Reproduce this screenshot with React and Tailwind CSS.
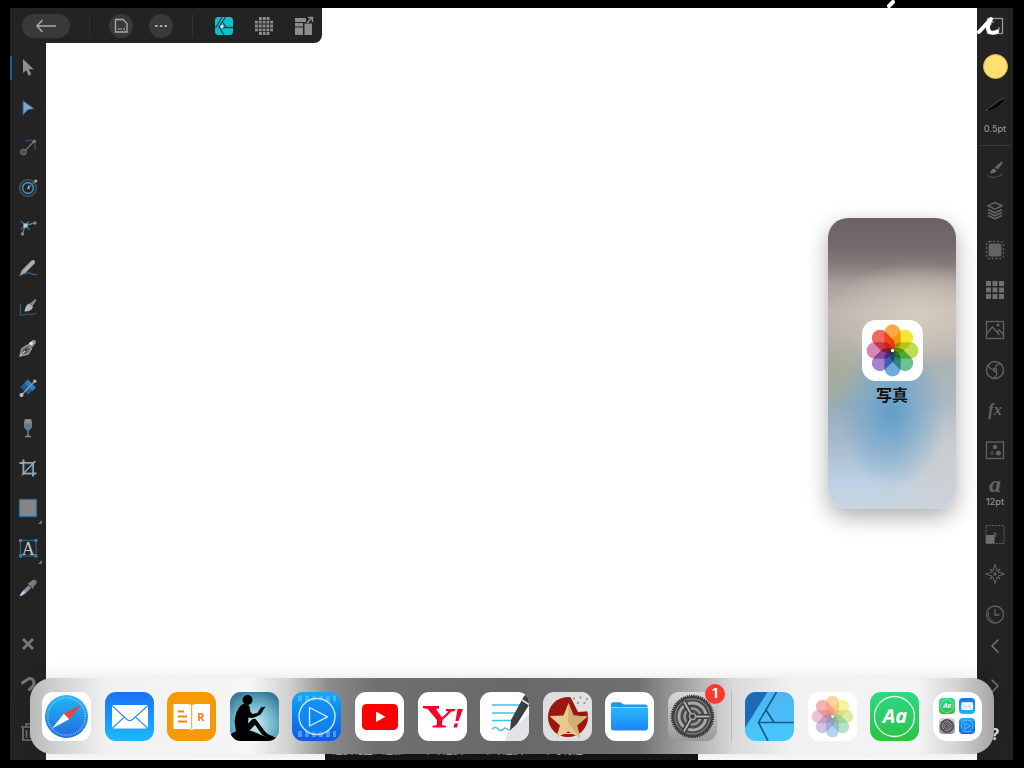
import { ChevronLeft, ChevronRight } from 'lucide-react'

const petals = ['#fb9d26', '#f5e31a', '#b2d83c', '#56bb84', '#559fdc', '#9674c6', '#d076ac', '#f2524a']

function Flower({ className = '' }) {
  return (
    <svg viewBox="0 0 60 60" className={`isolate size-full ${className}`}>
      <rect width="60" height="60" fill="#fff" />
      {petals.map((c, i) => (
        <rect key={c} x="22" y="4.5" width="16" height="25.5" rx="8" fill={c} opacity="0.88"
          transform={`rotate(${i * 45} 30 30)`} className="mix-blend-multiply" />
      ))}
      <circle cx="30" cy="30" r="1.6" fill="#fff" />
    </svg>
  )
}

/* 24px drawings for the tool rails */
function Icon({ children }) {
  return (
    <svg viewBox="0 0 24 24" width="24" height="24" fill="none" stroke="currentColor" strokeWidth="1.3" className="shrink-0">
      {children}
    </svg>
  )
}

const tools = [
  { label: 'Move', art: <path d="M7 3v14l3.2-2.8 2.4 5.6 2.8-1.2-2.5-5.4h4.8z" fill="#8d8d8d" stroke="none" /> },
  { label: 'Node', art: <path d="M7 4.8 18 12.6 11.5 14 7 19z" fill="#84a3bf" stroke="#23628f" strokeWidth="1" /> },
  { label: 'Corner', art: <>
    <path d="M9 4.5h10v10" stroke="#1f5173" />
    <circle cx="7.5" cy="16" r="2.6" fill="#4a4a4a" stroke="#6a6a6a" />
    <path d="m9.5 14 8-8" stroke="#777" /><circle cx="18.2" cy="5.5" r="1.8" fill="#777" stroke="none" />
  </> },
  { label: 'Contour', art: <>
    <circle cx="12" cy="12" r="8.3" stroke="#35627f" /><circle cx="12" cy="12" r="5.4" stroke="#4d88ad" strokeWidth="1.6" />
    <path d="m11 13.5 2-5 1.2 3.4z" fill="#b9cfdd" stroke="none" /><path d="m13 11.5 6-6" stroke="#3c7196" />
    <circle cx="19.8" cy="5" r="1.6" fill="#a5a5a5" stroke="none" />
  </> },
  { label: 'Point transform', art: <>
    <path d="m5 5 9 9M13 5.5l-8 8" stroke="#2c74a6" /><path d="m9.5 9.5 9-2.5M9.5 9.5l-3 8" stroke="#777" />
    <rect x="7.5" y="7.5" width="4" height="4" fill="#a9cfe8" stroke="none" />
    <circle cx="19" cy="7" r="1.7" fill="#858585" stroke="none" /><circle cx="6.5" cy="18" r="1.7" fill="#858585" stroke="none" />
  </> },
  { label: 'Pencil', art: <>
    <path d="M9 18.5c4-5 6 1.5 11.5 0" stroke="#2a6f9f" />
    <path d="M3.5 20 6 14 15.5 4.5c2-1.6 4.6.8 3.2 3L9.5 17z" fill="#a2a2a2" stroke="none" />
    <path d="M17.5 5.5 8 15.5" stroke="#c4c4c4" strokeWidth="1" />
  </> },
  { label: 'Vector brush', art: <>
    <path d="M4.5 8v11c4 1 5-2 8-1s4 1 8-1" stroke="#225b84" />
    <path d="M20 2.5 14 7.5l2.5 2.5 3.5-5z" fill="#8a8a8a" stroke="none" />
    <path d="M8.5 15.5c.5-4.5 2.5-7.5 5-8l3.5 3.2C16 14 13 15.5 8.5 15.5z" fill="#b4b4b4" stroke="none" />
  </> },
  { label: 'Pen', art: <>
    <path d="M4 20 6 12.5 12 9l3.5 3.5-3.5 5.7z" fill="#5f696f" stroke="#9a9a9a" strokeWidth="1.4" />
    <path d="m4.5 19.5 5-5" stroke="#ccc" strokeWidth="1" /><circle cx="10" cy="13.8" r="1" fill="#222" stroke="none" />
    <path d="m12.5 8 3.5-3.5c2-1.5 5 .5 3.5 3L16 11.5z" fill="#999" stroke="none" />
    <circle cx="15" cy="7.5" r="1.8" fill="#e4e4e4" stroke="none" />
  </> },
  { label: 'Fill', art: <>
    <path d="m4 11 8-7.5 8 8-8 7z" fill="#1d5d96" stroke="none" /><path d="m8.5 7 8 8 3.5-3.5-8-8z" fill="#2c7dbd" stroke="none" />
    <path d="M6 18.5 18.5 5.5" stroke="#8d9aa4" /><circle cx="5.5" cy="19" r="2" fill="#c3c3c3" stroke="none" />
    <circle cx="18.8" cy="5.2" r="1.8" fill="#aaa" stroke="none" />
  </> },
  { label: 'Transparency', art: <>
    <path d="M9 3.5h6l.7 6c0 2.8-1.7 4.5-3.7 4.5s-3.7-1.7-3.7-4.5z" fill="#577f99" stroke="#6e8795" strokeWidth="1" />
    <path d="M9.3 4h5.4l.3 3.5H9z" fill="#a08a84" stroke="none" /><path d="M12 14v6M9 20.5h6" stroke="#888" />
  </> },
  { label: 'Crop', art: <>
    <path d="M7.5 3.5v14h13" stroke="#9aa5ac" strokeWidth="2" /><path d="M3.5 7h13.5v13.5" stroke="#9aa5ac" strokeWidth="2" />
    <path d="M8.5 8H16v8.5H8.5z" stroke="#22608a" strokeWidth="1" /><path d="M6 19 19.5 5" stroke="#a5a5a5" />
  </> },
  { label: 'Rectangle', more: true, art: <rect x="3.5" y="3.5" width="17" height="17" fill="#858585" stroke="#2d7099" /> },
  { label: 'Artistic text', more: true, art: <>
    <rect x="4.5" y="4.5" width="15.5" height="15.5" stroke="#285f83" />
    <path d="M3 3h3v3H3zM18.5 3h3v3h-3zM3 18.5h3v3H3zM18.5 18.5h3v3h-3z" fill="#3682b5" stroke="none" />
    <text x="12.2" y="18.5" textAnchor="middle" fontSize="18" fill="#c4c4c4" stroke="none" className="font-['Liberation_Serif']">A</text>
  </> },
  { label: 'Colour picker', art: <>
    <path d="M3.5 20.5 5.5 16l7-6.5 2.5 2.5L8.5 18.5z" fill="#8298a6" stroke="none" />
    <path d="m4.5 19.5 4-4" stroke="#d5e5ee" strokeWidth="1.5" />
    <path d="m11.5 7.5 5.5 5.5 1-3c3-2 3.5-4 2-5.5s-4-1-5.5 1.5z" fill="#797979" stroke="none" />
  </> },
]

const studios = [
  { label: 'Brushes', art: <>
    <path d="M4 17.5c5 3 10 2.5 16-1.5" stroke="#454545" />
    <path d="M6.5 15c1.5-.5 1.5-4 4.5-4.5l2.5 2c-.5 2.5-4 3-7 2.5zM12 9.5l6-5.5c1.5-.8 2 .5 1.2 1.5L14.5 11.5z" fill="#6c6c6c" stroke="none" />
  </> },
  { label: 'Layers', art: <path d="m12 4.5 7 3.3-7 3.3-7-3.3zM5 11.5l7 3.3 7-3.3M5 14.5l7 3.3 7-3.3M5 17.5l7 3.3 7-3.3" strokeWidth="1.5" /> },
  { label: 'Selection', art: <>
    <rect x="3.5" y="3.5" width="17" height="17" rx="3" strokeDasharray="2 1.8" />
    <rect x="5.5" y="5.5" width="13" height="13" rx="2.5" fill="currentColor" stroke="none" />
  </> },
  { label: 'Swatches', art: <path d="M3 3h5v5H3zM9.5 3h5v5h-5zM16 3h5v5h-5zM3 9.5h5v5H3zM9.5 9.5h5v5h-5zM16 9.5h5v5h-5zM3 16h5v5H3zM9.5 16h5v5h-5zM16 16h5v5h-5z" fill="#707070" stroke="none" /> },
  { label: 'Stock', art: <><rect x="3.5" y="3.5" width="17" height="17" /><path d="m3.5 16 6-7 7 8M14 14l2-2 4.5 4.5" /><circle cx="15" cy="7" r="1.5" fill="currentColor" stroke="none" /></> },
  { label: 'Adjustments', art: <>
    <circle cx="12" cy="12" r="8.5" strokeWidth="1.5" /><circle cx="12" cy="12" r="1.5" />
    <path d="M5 7c2 4 4 5 6.5 4.5M17.5 5.5c-4 .5-5.5 3-5 5.5M11 20c3.5-2.5 3.5-5 1.5-7.5" />
  </> },
  { label: 'Layer effects', art: <text x="12" y="17" textAnchor="middle" fontSize="16" fontWeight="700" fill="currentColor" stroke="none" className="font-['Liberation_Serif'] italic">fx</text> },
  { label: 'Symbols', art: <>
    <rect x="3.5" y="4" width="17" height="16.5" />
    <circle cx="12" cy="9" r="2.2" fill="currentColor" stroke="none" /><circle cx="15.5" cy="15" r="2.5" fill="currentColor" stroke="none" />
    <circle cx="9" cy="15" r="2.2" fill="#404040" stroke="none" />
  </> },
]

const panels = [
  { label: 'Transform', art: <>
    <rect x="3" y="3.5" width="18" height="18" strokeWidth="1" strokeDasharray="2 1" />
    <path d="M3 13h8.5v8.5H3z" fill="#707070" stroke="none" /><path d="M10.5 11.5h2v3.5" />
  </> },
  { label: 'Navigator', art: <>
    <path d="m12 2.500 2 6.500M12 2.500 10 9M21.500 12 15 10M21.500 12 15 14M12 21.500l2-6.500M12 21.500 10 15M2.500 12 9 10M2.500 12 9 14" strokeWidth="1" />
    <path d="m7 7 2.500 2.500M17 7l-2.500 2.500M7 17l2.500-2.500M17 17l-2.500-2.500" strokeWidth="1.600" /><circle cx="12" cy="12" r="1" />
  </> },
  { label: 'History', art: <><circle cx="12" cy="12.5" r="8.5" /><path d="M12 7v6h4.5" /><path d="M5.5 10c-.8 4 1 7.5 4.5 8.5" strokeWidth="1" /></> },
]

/* 49px drawings for the dock */
function Art({ children }) {
  return <svg viewBox="0 0 49 49" className="size-full">{children}</svg>
}

const safari = (
  <Art>
    <circle cx="24.5" cy="24.5" r="21.5" fill="url(#sea)" />
    <circle cx="24.5" cy="24.5" r="18.8" fill="none" stroke="#9fd8fb" strokeWidth="2" strokeDasharray=".6 1.37" />
    <path d="M39 13 21.8 21.8l5.4 5.4z" fill="#ef4136" /><path d="M10 36.5 21.8 21.8l5.4 5.4z" fill="#fff" />
  </Art>
)

const mail = (
  <Art>
    <rect x="7" y="13" width="36" height="23.5" rx="2" fill="#fff" />
    <path d="m7.5 14 14.5 13.5c1.8 1.5 3.8 1.5 5.5 0L42.5 14M7.5 36l12-11M42.5 36l-12-11" fill="none" stroke="#2f8ef5" strokeWidth="1.1" />
  </Art>
)

const books = (
  <Art>
    <path d="M6.5 12h14c2 0 4 .8 4.3 2 .4-1.2 2.2-2 4.2-2h14v25H28c-1.5 0-2 1.2-3.3 1.2S22.8 37 21.3 37H6.5z" fill="#fff" />
    <path d="M24.7 14v23" stroke="#f69a0b" strokeWidth="1" />
    <path d="M11 19.5h6M11 24.5h9M11 29.5h9" stroke="#ee8a12" strokeWidth="2" />
    <text x="34" y="28.5" textAnchor="middle" fontSize="11" fontWeight="700" fill="#e38a17" className="font-['Open_Sans']">R</text>
  </Art>
)

const kindle = (
  <Art>
    <circle cx="17.5" cy="8" r="5" />
    <path d="M13 12C7.500 15 5.500 22 4.500 30l1.500 10h12l7-7 7 9.500c3 2.500 7 2.500 12 4l-1-2.500c-3-.5-6-2-8-4.500l-8.500-11.500c-1-1.500-3-1.500-4.500-.5L18 31.500l.500-6 3.500.5c3 0 5-2 6.500-4l-1.500-1-4.500 1-2-2-1-5.500c-1-2-4-2.500-6.500-2.500z" />
    <path d="m25.500 23.500 5.500-8 4.500-1-5 8-4 2z" />
    <path d="M0 43c4-4.500 11-5.500 18-4.500 8 1 13 5 18 6 5 .5 9 0 13 2v2.500H0z" />
  </Art>
)

const video = (
  <Art>
    <path d="M6 6.5h38M6 42h38" stroke="#62bff7" strokeWidth="6" strokeDasharray="4 3" opacity=".65" />
    <circle cx="25" cy="24.5" r="18" fill="#178bf3" fillOpacity=".65" stroke="#c9e9ff" strokeWidth="1.4" />
    <path d="M17.5 15.5v18.5l18-9.2z" fill="none" stroke="#c9e9ff" strokeWidth="1.4" strokeLinejoin="round" />
  </Art>
)

const youtube = (
  <Art><rect x="7" y="12" width="36" height="26" rx="4.5" fill="#fe0000" /><path d="M21 19.5v10.5l9.5-5.2z" fill="#fff" /></Art>
)

const yahoo = (
  <Art>
    <path d="M5 14h16v2.5l-3 .4 6 8.6 6.5-6-2.5-.6V17H37v2l-3.5.6-9 8.5-.6 5 4 .7V35.500H14.500v-1.700l4-.6.6-5L9.500 16.800 5 16.300z" fill="#f5002d" />
    <path d="M39.500 17H45l-4.500 12H37.500zM36.500 31.500h3.500l-1 4h-3.500z" fill="#f5002d" />
  </Art>
)

const notes = (
  <Art>
    <path d="M28 40 49 22v27H25z" fill="#e4e4e6" />
    <path d="M12 13h28M12 21h24M12 28.500h20M12 37.500c3-3.500 5-2 6.500 0s4 1 5.500-1 3 2 6 1.500" fill="none" stroke="#42c0ec" strokeWidth="1.4" />
    <path d="M30 38.500 31 28 43.500 5 46 2l3 2v9L37 32z" fill="#3d3e42" /><path d="m42 8 7 4.500" stroke="#e5e5e5" strokeWidth="1.5" />
  </Art>
)

const star = (
  <Art>
    <circle cx="25" cy="25" r="20" fill="#9b1512" />
    <path d="M25 0h24v19l-14 1z" fill="#e2e1e2" />
    <path d="m25.500 11 5 12.500 14 1-10.500 9 3.500 13-12-7-12.500 6.500 4-12.500L6.500 24l14-.5z" fill="#e6c98f" />
    <path d="m25.500 11 5 12.500 14 1-10.500 9 3.500 13L25 30z" fill="#d1af74" />
    <path d="M30 6.500h2M36.500 5.500h2M43 7h2M34 11h2M40.500 11h2" stroke="#a8958a" strokeWidth="2" />
    <path d="M18 41.500h14" stroke="#e8d0ac" strokeWidth="1" />
  </Art>
)

const files = (
  <Art>
    <path d="M6 20v-7.500c0-1.500.8-2.300 2.300-2.300h6c1.500 0 2 .5 2.800 1.300s1.500 1 3 1h20c1.700 0 2.500 1 2.500 2.500v5z" fill="#199ae4" />
    <path d="M6 15.500h37v20c0 2-1 3-3 3H9c-2 0-3-1-3-3z" fill="url(#folder)" /><path d="M6 15.500h37" stroke="#75d8fc" strokeWidth="1" />
  </Art>
)

const gear = (
  <Art>
    <circle cx="24.5" cy="24.5" r="20.5" fill="#48484a" stroke="#303032" strokeWidth="2.5" strokeDasharray="1.3 .9" />
    <circle cx="24.5" cy="24.5" r="17.5" fill="none" stroke="#8e8e91" strokeWidth="1" />
    <circle cx="24.5" cy="24.5" r="13.5" fill="none" stroke="#a9a9ac" strokeWidth="3" />
    <circle cx="24.5" cy="24.5" r="8" fill="none" stroke="#98989b" strokeWidth="2.6" />
    <path d="M24.5 24.5H42M24.5 24.5 15.7 9.3M24.5 24.5l-8.8 15.2" stroke="#39393b" strokeWidth="5" />
    <path d="M27 24.5h14.5M23.2 22.3 16 9.8M23.2 26.7 16 39.2" stroke="#b0b0b3" strokeWidth="2" />
    <circle cx="24.5" cy="24.5" r="3" fill="#39393b" stroke="#a5a5a8" strokeWidth="1.3" />
  </Art>
)

const designer = (
  <Art>
    <path d="M0 0h22.5L0 36z" fill="#1d6bb2" />
    <path d="M31.5 0 13.5 30.5 23 49M21 18l8 12.5M13.5 30.5H49" fill="none" stroke="#195b8f" strokeWidth="1.7" />
  </Art>
)

const fonts = (
  <Art>
    <circle cx="24.5" cy="24.5" r="20" fill="none" stroke="#eafff0" strokeWidth="1.3" />
    <text x="25" y="31" textAnchor="middle" fontSize="20" fontWeight="700" fill="#fff" className="font-['Open_Sans'] italic">Aa</text>
  </Art>
)

const recent = [
  { label: 'Safari', bg: 'bg-white', art: safari },
  { label: 'Mail', bg: 'bg-linear-to-b from-[#1d6ff2] to-[#1fb9fb]', art: mail },
  { label: 'Dictionary', bg: 'bg-[#f79a0a]', art: books },
  { label: 'Kindle', bg: 'bg-[radial-gradient(circle_at_50%_65%,#d2eff0,#6cb5ca_50%,#1d5d7d)]', art: kindle },
  { label: 'Video', bg: 'bg-linear-to-b from-[#17a8f5] to-[#1556e8]', art: video },
  { label: 'YouTube', bg: 'bg-white', art: youtube },
  { label: 'Yahoo', bg: 'bg-white', art: yahoo },
  { label: 'Notes', bg: 'bg-white', art: notes },
  { label: 'iMovie', bg: 'bg-[#dedddf]', art: star },
  { label: 'Files', bg: 'bg-white', art: files },
  { label: 'Settings', bg: 'bg-linear-to-b from-[#d9d9db] to-[#98989b]', art: gear, badge: 1 },
]

const suggested = [
  { label: 'Designer', bg: 'bg-linear-to-b from-[#4fb5f2] to-[#45c8fb]', art: designer },
  { label: 'Photos', bg: 'bg-white', art: <Flower className="opacity-50" /> },
  { label: 'Fonts', bg: 'bg-linear-to-b from-[#2dd885] to-[#2cc341]', art: fonts },
]

const library = [suggested[2], recent[1], recent[10], recent[4]]

function DockIcon({ label, bg, art, badge }) {
  return (
    <button aria-label={label} className="relative size-[49px] shrink-0">
      <span className={`block size-full overflow-hidden rounded-[11px] ${bg}`}>{art}</span>
      {badge && (
        <span className="absolute -top-2 -right-2 flex size-5 items-center justify-center rounded-full bg-[#fb3b30] text-[13px] font-bold text-white">
          {badge}
        </span>
      )}
    </button>
  )
}

function RailButton({ label, art }) {
  return <button aria-label={label} className="flex h-6 w-full justify-center"><Icon>{art}</Icon></button>
}

export default function App() {
  return (
    <div className="relative flex min-h-screen overflow-hidden bg-black py-2 pr-[11px] pl-[10px] font-['Inter','Noto_Sans_CJK_JP',sans-serif]">
      <svg width="0" height="0" className="absolute">
        <defs>
          <linearGradient id="sea" x2="0" y2="1"><stop stopColor="#22b9f6" /><stop offset="1" stopColor="#2269df" /></linearGradient>
          <linearGradient id="folder" x2="0" y2="1"><stop stopColor="#28b7f9" /><stop offset="1" stopColor="#1e86f5" /></linearGradient>
        </defs>
      </svg>

      {/* Tools */}
      <aside className="flex w-9 shrink-0 flex-col gap-4 bg-[#232323] pt-12 text-[#777]">
        {tools.map(({ label, art, more }, i) => (
          <button key={label} aria-label={label}
            className={`relative flex h-6 w-full justify-center border-l-2 pr-0.5 ${i === 0 ? 'border-[#1d5c8e]' : 'border-transparent'}`}>
            <Icon>{art}</Icon>
            {more && <span className="absolute right-1 -bottom-1 size-1 bg-[#777] [clip-path:polygon(100%_0,100%_100%,0_100%)]" />}
          </button>
        ))}
        <div className="flex flex-col gap-4 pt-4">
          <RailButton label="Deselect" art={<path d="m7 7 10 10M17 7 7 17" strokeWidth="2.8" />} />
          <RailButton label="Snapping" art={<path d="m5.5 11.5 6-4c3-2 6-.5 6.500 2.500.5 2.500-1 4.500-3 6L12.500 18.500" strokeWidth="3" />} />
          <div className="pt-2">
            <RailButton label="Delete" art={<path d="M5 7h15M10 6V4h5v2M7 8v12h11V8M10.500 10v8M14.500 10v8" strokeWidth="1.6" />} />
          </div>
        </div>
      </aside>

      {/* Canvas */}
      <main className="relative min-w-0 flex-1 bg-white">
        <section className="absolute top-[210px] right-[21px] flex h-[291px] w-32 flex-col items-center justify-center gap-0.5 rounded-[20px] bg-[radial-gradient(ellipse_42%_26%_at_50%_67%,#5b9ccbe6,#6ba5cf99_45%,transparent),radial-gradient(ellipse_45%_14%_at_0%_53%,#a7a98bb3,transparent),radial-gradient(ellipse_65%_34%_at_100%_84%,#cfd0cf,transparent),radial-gradient(ellipse_70%_18%_at_70%_33%,#d6cbc0,transparent),linear-gradient(#6b6265,#736a6c_10%,#8a7f7f_17%,#aca19b_23%,#bfb6af_32%,#b9b5af_44%,#a3b2b6_55%,#98abba_64%,#a6b9ca_76%,#bcd0e5_90%,#c8d5e1)] shadow-[0_8px_22px_rgba(0,0,0,0.32)]">
          <div className="size-[61px] overflow-hidden rounded-[14px]"><Flower /></div>
          <h2 className="text-base leading-6 font-bold text-[#111]">写真</h2>
        </section>
        <footer className="absolute inset-x-[279px] bottom-0 flex h-5 gap-5 rounded-t bg-[#161616] pt-1 pl-2 text-[10px] leading-3 text-[#bbb]">
          <span>選択範囲に追加</span>
          <span>下の選択</span>
          <span>下の選択</span>
          <span>下も付近</span>
        </footer>
      </main>

      {/* Studios */}
      <aside className="flex w-9 shrink-0 flex-col items-center bg-[#232323] pt-1.5 text-[#636363]">
        <RailButton label="Full screen" art={<><rect x="4.5" y="4.5" width="15" height="15" stroke="#999" /><path d="M8 11V8h3M16 13v3h-3" stroke="#999" /></>} />
        <button aria-label="Colour" className="mt-4 size-[25px] rounded-full border border-[#d8b655] bg-[#fedf70]" />
        <button className="mt-[14px] flex flex-col items-center text-[9px] leading-3 font-medium text-[#929292]">
          <Icon>
            <path d="M2.5 17c6-1 9-9 19.5-12.5" stroke="#424242" />
            <path d="M5 16.500c6-1 7-6 14.500-9-4 5-8 8-14.500 9z" fill="#000" stroke="#000" />
          </Icon>
          <span className="pt-1.5">0.5pt</span>
        </button>
        <hr className="mt-2.5 w-[30px] border-[#393939]" />
        <div className="flex w-full flex-col gap-4 pt-3">
          {studios.map((s) => <RailButton key={s.label} {...s} />)}
        </div>
        <button className="mt-2.5 flex flex-col items-center">
          <span className="font-['Liberation_Serif'] text-2xl leading-6 font-bold italic">a</span>
          <span className="text-[9px] leading-3 font-medium text-[#929292]">12pt</span>
        </button>
        <div className="flex w-full flex-col gap-4 pt-3.5">
          {panels.map((s) => <RailButton key={s.label} {...s} />)}
        </div>
        <button aria-label="Undo" className="mt-2 text-[#777]"><ChevronLeft size={24} strokeWidth={1.5} /></button>
        <button aria-label="Redo" className="mt-4 text-[#777]"><ChevronRight size={24} strokeWidth={1.5} /></button>
        <button className="mt-6 text-base leading-6 font-bold text-[#ddd]">?</button>
      </aside>

      {/* Toolbar */}
      <header className="absolute top-2 left-[10px] flex h-[35px] items-center gap-4 rounded-br-lg bg-[#232323] pr-1.5 pl-3 text-[#8c8c8c]">
        <button aria-label="Back" className="flex h-6 w-12 items-center justify-center rounded-full bg-[#393939]">
          <Icon><path d="M22 12H3M8.500 6 3 12l5.500 6" stroke="#aaa" strokeWidth="1.5" /></Icon>
        </button>
        <span className="mx-[3px] h-6 w-px bg-[#313131]" />
        <button aria-label="Document" className="size-6 rounded-full bg-[#393939]">
          <Icon><path d="M6.500 5.500h7.500l4 4v8.500H6.500z" stroke="#aaa" /><path d="M9 15h1.500M11.500 15H13M14.500 15H16" stroke="#aaa" strokeWidth="1.5" /></Icon>
        </button>
        <button aria-label="More" className="size-6 rounded-full bg-[#393939]">
          <Icon><path d="M6 12h2.500M10.800 12h2.500M15.500 12H18" stroke="#aaa" strokeWidth="2.2" /></Icon>
        </button>
        <span className="mx-[3px] h-6 w-px bg-[#313131]" />
        <button aria-label="Designer persona">
          <Icon>
            <rect x="3" y="3" width="18" height="18" rx="3.5" fill="#15bdd1" stroke="none" />
            <path d="M10 3 3.500 14M13.500 3 7 13l5 8M10.500 8l3.500 5M10 13.500h11" stroke="#124950" />
            <circle cx="10" cy="12.500" r="1.500" fill="#dff" stroke="none" />
          </Icon>
        </button>
        <button aria-label="Pixel persona">
          <Icon>
            <path d="M7 4.500h10.500M3 8.200h18M3 12h18M3 15.800h18M7 19.500h10.500" strokeWidth="2.8" strokeDasharray="2.9 .9" />
          </Icon>
        </button>
        <button aria-label="Export persona">
          <Icon>
            <path d="M3 4h11v4H3zM3 9h8v3.500H3zM3 13.500h8V21H3zM12.500 9.500H20V21h-7.500z" fill="currentColor" stroke="none" />
            <path d="m15 9 5-5.500M16 3.500h4.500V8" strokeWidth="1.5" />
          </Icon>
        </button>
      </header>

      {/* Handwriting strokes */}
      <svg width="140" height="44" viewBox="884 0 140 44" fill="none" stroke="#fff" strokeWidth="4" strokeLinecap="round" strokeLinejoin="round" className="pointer-events-none absolute top-0 right-0">
        <path d="m893 2-4 4M979 32l12-13c-3 4-5 12 0 13.500 2 .5 4 .3 6-.8" />
      </svg>

      {/* Dock */}
      <nav className="absolute inset-x-[30px] bottom-[14px] flex items-center justify-between rounded-[22px] bg-[linear-gradient(90deg,#b9b9b9,#d2d2d2_3%,#f1f1f1_8%,#f6f6f6_23%,#cfcfcf_27%,#8b8b8b_31%,#707070_36%,#686868_50%,#707070_63%,#999_67%,#d9d9d9_73%,#f1f1f1_79%,#f4f4f4_92%,#d5d5d5_96%,#a5a5a5)] px-3 py-[13px] shadow-[0_0_18px_rgba(0,0,0,0.12)]">
        {recent.map((app) => <DockIcon key={app.label} {...app} />)}
        <span className="h-[50px] w-px bg-[#b9b9b9]" />
        {suggested.map((app) => <DockIcon key={app.label} {...app} />)}
        <button aria-label="App library" className="grid size-[49px] grid-cols-[auto_auto] place-content-center gap-1 rounded-[14px] bg-white">
          {library.map(({ label, bg, art }) => (
            <span key={label} className={`size-4 overflow-hidden rounded ${bg}`}>{art}</span>
          ))}
        </button>
      </nav>
    </div>
  )
}
